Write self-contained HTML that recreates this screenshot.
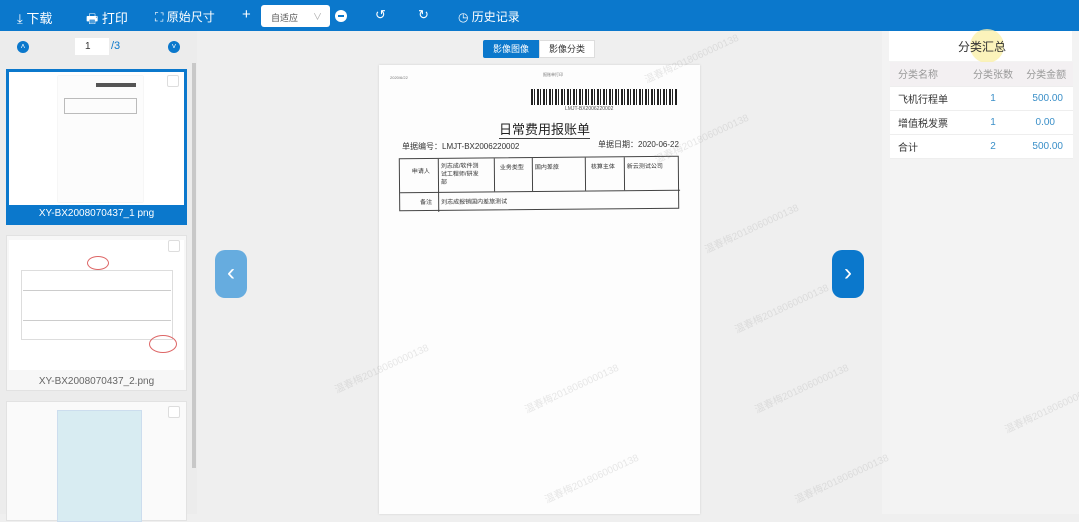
<!DOCTYPE html><html><head><meta charset="utf-8"><style>
*{margin:0;padding:0;box-sizing:border-box}
body{width:1079px;height:514px;overflow:hidden;background:#efefef;font-family:"Liberation Sans","Noto Sans CJK SC",sans-serif;position:relative;font-size:12px;color:#333}
.tb{position:absolute;left:0;top:0;width:1079px;height:31px;background:#0b78cc;color:#fff}
.tb span{position:absolute;top:8px;font-size:13px}
.abs{position:absolute}
.left{left:0;top:31px;width:197px;height:483px;background:#ececec}
.card{position:absolute;left:6px;width:181px;background:#f7f7f7;border:1px solid #e2e2e2}
.cb{position:absolute;right:6px;top:4px;width:12px;height:12px;border:1px solid #ddd;background:#fff;border-radius:2px}
.right{left:882px;top:31px;width:197px;height:483px;background:#f3f3f3}
table{border-collapse:collapse;width:183px;font-size:10px}
td{height:24px;border-bottom:1px solid #eee;background:#fff}
.doc{left:379px;top:65px;width:321px;height:449px;background:#fdfdfd;box-shadow:0 0 2px #ccc}
.wm{position:absolute;color:rgba(150,150,150,.22);font-size:10px;transform:rotate(-25deg);white-space:nowrap}
.ln{position:absolute;height:1px;background:#c99}
</style></head><body>
<div class="tb">
<span style="left:17px;font-size:13px">⤓ 下载</span>
<span style="left:86px">🖶 打印</span>
<span style="left:155px;font-size:12px">⛶ 原始尺寸</span>
<span style="left:242px;top:6px;font-size:15px">+</span>
<div class="abs" style="left:261px;top:5px;width:69px;height:22px;background:#fff;border-radius:3px;color:#555;font-size:9px;padding:6px 0 0 10px">自适应<span style="position:absolute;left:52px;top:5px;color:#aaa;font-size:9px">∨</span></div>
<div class="abs" style="left:335px;top:10px;width:12px;height:12px;border-radius:50%;background:#fff"><div style="position:absolute;left:3px;top:5px;width:6px;height:2px;background:#0b78cc"></div></div>
<span style="left:375px;font-size:13px;top:7px">↺</span>
<span style="left:418px;font-size:13px;top:7px">↻</span>
<span style="left:458px;font-size:12px">◷ 历史记录</span>
</div>
<div class="abs left">
<div class="abs" style="left:17px;top:10px;width:12px;height:12px;border-radius:50%;background:#0b78cc;color:#fff;font-size:8px;text-align:center;line-height:12px">˄</div>
<div class="abs" style="left:75px;top:7px;width:34px;height:17px;background:#fff;font-size:10px;padding:3px 0 0 10px">1</div>
<div class="abs" style="left:111px;top:9px;font-size:11px;color:#0b78cc">/3</div>
<div class="abs" style="left:168px;top:10px;width:12px;height:12px;border-radius:50%;background:#0b78cc;color:#fff;font-size:8px;text-align:center;line-height:12px">˅</div>
<div class="abs" style="left:192px;top:32px;width:4px;height:405px;background:#c8c8c8"></div>
<div class="card" style="top:38px;height:156px;background:#0b78cc;border:2px solid #0b78cc">
<div style="position:absolute;left:1px;top:1px;width:175px;height:133px;background:#fff"><div style="position:absolute;left:49px;top:4px;width:85px;height:126px;background:#fcfcfc;box-shadow:0 0 1px #ccc"><div style="position:absolute;left:38px;top:7px;width:40px;height:4px;background:#555"></div><div style="margin:22px 6px;height:16px;border:1px solid #bbb"></div></div></div>
<div class="cb"></div>
<div style="position:absolute;top:137px;width:100%;text-align:center;color:#fff;font-size:10px">XY-BX2008070437_1 png</div>
</div>
<div class="card" style="top:204px;height:156px">
<div style="position:absolute;left:2px;top:4px;width:175px;height:130px;background:#fff">
<div style="position:absolute;left:12px;top:30px;width:152px;height:70px;border:1px solid #ddd"></div>
<div class="ln" style="left:14px;top:50px;width:148px;background:#ccc"></div>
<div class="ln" style="left:14px;top:80px;width:148px;background:#ccc"></div>
<div style="position:absolute;left:78px;top:16px;width:22px;height:14px;border:1px solid #d66;border-radius:50%"></div>
<div style="position:absolute;left:140px;top:95px;width:28px;height:18px;border:1px solid #d66;border-radius:50%"></div>
</div>
<div class="cb"></div>
<div style="position:absolute;top:140px;width:100%;text-align:center;color:#666;font-size:10px">XY-BX2008070437_2.png</div>
</div>
<div class="card" style="top:370px;height:120px;background:#fafafa">
<div style="position:absolute;left:50px;top:8px;width:85px;height:112px;background:#d8ecf2;border:1px solid #cde"></div>
<div class="cb"></div>
</div>
</div>
<div class="abs" style="left:483px;top:40px;width:56px;height:18px;background:#0b78cc;color:#fff;font-size:9px;text-align:center;line-height:18px;border-radius:2px 0 0 2px">影像图像</div>
<div class="abs" style="left:539px;top:40px;width:56px;height:18px;background:#fff;border:1px solid #ddd;color:#333;font-size:9px;text-align:center;line-height:16px">影像分类</div>
<div class="abs doc">
<div class="abs" style="left:11px;top:10px;font-size:4px;color:#777">2020/6/22</div>
<div class="abs" style="left:164px;top:7px;font-size:4px;color:#777">报账单打印</div>
<div class="abs" style="left:152px;top:24px;width:146px;height:16px;background:repeating-linear-gradient(90deg,#222 0 2px,#fff 2px 3px,#222 3px 4px,#fff 4px 6px)"></div>
<div class="abs" style="left:186px;top:41px;font-size:5px;color:#555">LMJT-BX2006220002</div>
<div class="abs" style="left:120px;top:54px;font-size:13px;color:#222;border-bottom:1px solid #444">日常费用报账单</div>
<div class="abs" style="left:23px;top:76px;font-size:8px">单据编号：LMJT-BX2006220002</div>
<div class="abs" style="left:219px;top:74px;font-size:8px">单据日期：2020-06-22</div>
<div class="abs" style="left:20px;top:92px;width:280px;height:53px;border:1px solid #444;transform:rotate(-.5deg)">
<div class="abs" style="left:0;top:33px;width:280px;border-top:1px solid #444"></div>
<div class="abs" style="left:38px;top:0;height:53px;border-left:1px solid #444"></div>
<div class="abs" style="left:94px;top:0;height:33px;border-left:1px solid #444"></div>
<div class="abs" style="left:132px;top:0;height:33px;border-left:1px solid #444"></div>
<div class="abs" style="left:185px;top:0;height:33px;border-left:1px solid #444"></div>
<div class="abs" style="left:224px;top:0;height:33px;border-left:1px solid #444"></div>
<div class="abs" style="left:12px;top:7px;font-size:6px">申请人</div>
<div class="abs" style="left:41px;top:4px;font-size:6px;line-height:8px">刘志成/软件测<br>试工程师/研发<br>部</div>
<div class="abs" style="left:100px;top:4px;font-size:6px">业务类型</div>
<div class="abs" style="left:135px;top:4px;font-size:6px">国内差旅</div>
<div class="abs" style="left:191px;top:4px;font-size:6px">核算主体</div>
<div class="abs" style="left:227px;top:4px;font-size:6px">新云测试公司</div>
<div class="abs" style="left:20px;top:38px;font-size:6px">备注</div>
<div class="abs" style="left:41px;top:38px;font-size:6px">刘志成报销国内差旅测试</div>
</div>
</div>
<div class="abs" style="left:215px;top:250px;width:32px;height:48px;background:#66acdf;border-radius:10px;color:#fff;font-size:24px;text-align:center;line-height:46px">‹</div>
<div class="abs" style="left:832px;top:250px;width:32px;height:48px;background:#0b78cc;border-radius:10px;color:#fff;font-size:24px;text-align:center;line-height:46px">›</div>
<div class="abs right">
<div class="abs" style="left:7px;top:0;width:183px;height:30px;background:#fff"></div>
<div class="abs" style="left:88px;top:-2px;width:34px;height:34px;border-radius:50%;background:rgba(250,240,170,.8)"></div>
<div class="abs" style="left:76px;top:7px;font-size:12px">分类汇总</div>
<table class="abs" style="left:8px;top:31px">
<tr><td style="background:#f3f0f2;color:#999;padding-left:8px">分类名称</td><td style="background:#f3f0f2;color:#999;text-align:center">分类张数</td><td style="background:#f3f0f2;color:#999;text-align:center">分类金额</td></tr>
<tr><td style="padding-left:8px">飞机行程单</td><td style="text-align:center;color:#3a8fc8">1</td><td style="text-align:right;padding-right:10px;color:#3a8fc8">500.00</td></tr>
<tr><td style="padding-left:8px">增值税发票</td><td style="text-align:center;color:#3a8fc8">1</td><td style="text-align:right;padding-right:18px;color:#3a8fc8">0.00</td></tr>
<tr><td style="padding-left:8px">合计</td><td style="text-align:center;color:#3a8fc8">2</td><td style="text-align:right;padding-right:10px;color:#3a8fc8">500.00</td></tr>
</table>
</div>
<div class="wm" style="left:640px;top:50px">温春梅2018060000138</div>
<div class="wm" style="left:650px;top:130px">温春梅2018060000138</div>
<div class="wm" style="left:700px;top:220px">温春梅2018060000138</div>
<div class="wm" style="left:730px;top:300px">温春梅2018060000138</div>
<div class="wm" style="left:750px;top:380px">温春梅2018060000138</div>
<div class="wm" style="left:790px;top:470px">温春梅2018060000138</div>
<div class="wm" style="left:520px;top:380px">温春梅2018060000138</div>
<div class="wm" style="left:540px;top:470px">温春梅2018060000138</div>
<div class="wm" style="left:330px;top:360px">温春梅2018060000138</div>
<div class="wm" style="left:1000px;top:400px">温春梅2018060000138</div>
</body></html>
